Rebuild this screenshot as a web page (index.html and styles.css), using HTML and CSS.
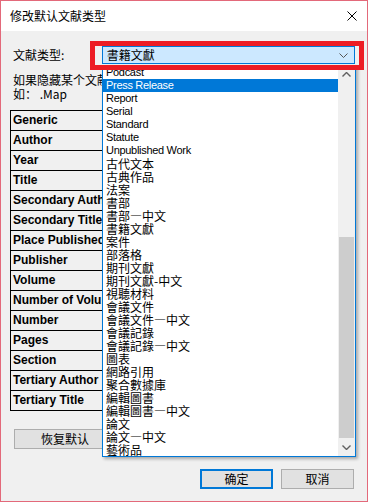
FILE: index.html
```html
<!DOCTYPE html>
<html lang="zh-CN">
<head>
    <meta charset="UTF-8">
    <meta name="viewport" content="width=device-width, initial-scale=1.0">
    <title>修改默认文献类型</title>
    <link rel="stylesheet" href="styles.css">
</head>
<body>
    <div class="window">
        <div class="titlebar">
            <span class="title">修改默认文献类型</span>
            <svg class="close" width="10" height="10" viewBox="0 0 10 10">
                <path d="M0.5 0.5 L9.5 9.5 M9.5 0.5 L0.5 9.5" stroke="#000" stroke-width="1" fill="none"/>
            </svg>
        </div>

        <div class="content">
            <div class="type-row">
                <label class="type-label">文献类型:</label>
                <div class="combo">
                    <span class="combo-value">書籍文獻</span>
                    <svg class="chev" width="9" height="5" viewBox="0 0 9 5">
                        <path d="M0.5 0.5 L4.5 4.5 L8.5 0.5" stroke="#555" stroke-width="1" fill="none"/>
                    </svg>
                </div>
            </div>

            <div class="hint">
                <p>如果隐藏某个文献类型，请在类型名称前加上“.”，</p>
                <p>如：&nbsp;.Map</p>
            </div>

            <table class="fields">
                <tr><td>Generic</td><td></td></tr>
                <tr><td>Author</td><td></td></tr>
                <tr><td>Year</td><td></td></tr>
                <tr><td>Title</td><td></td></tr>
                <tr><td>Secondary Author</td><td></td></tr>
                <tr><td>Secondary Title</td><td></td></tr>
                <tr><td>Place Published</td><td></td></tr>
                <tr><td>Publisher</td><td></td></tr>
                <tr><td>Volume</td><td></td></tr>
                <tr><td>Number of Volumes</td><td></td></tr>
                <tr><td>Number</td><td></td></tr>
                <tr><td>Pages</td><td></td></tr>
                <tr><td>Section</td><td></td></tr>
                <tr><td>Tertiary Author</td><td></td></tr>
                <tr><td>Tertiary Title</td><td></td></tr>
            </table>

            <button class="btn restore">恢复默认</button>

            <div class="footer">
                <button class="btn primary">确定</button>
                <button class="btn">取消</button>
            </div>
        </div>

        <!-- open dropdown of the combo box -->
        <div class="dropdown">
            <div class="options">
                <div class="opt">Podcast</div>
                <div class="opt selected">Press Release</div>
                <div class="opt">Report</div>
                <div class="opt">Serial</div>
                <div class="opt">Standard</div>
                <div class="opt">Statute</div>
                <div class="opt">Unpublished Work</div>
                <div class="opt zh">古代文本</div>
                <div class="opt zh">古典作品</div>
                <div class="opt zh">法案</div>
                <div class="opt zh">書部</div>
                <div class="opt zh">書部—中文</div>
                <div class="opt zh">書籍文獻</div>
                <div class="opt zh">案件</div>
                <div class="opt zh">部落格</div>
                <div class="opt zh">期刊文獻</div>
                <div class="opt zh">期刊文獻-中文</div>
                <div class="opt zh">視聽材料</div>
                <div class="opt zh">會議文件</div>
                <div class="opt zh">會議文件—中文</div>
                <div class="opt zh">會議記錄</div>
                <div class="opt zh">會議記錄—中文</div>
                <div class="opt zh">圖表</div>
                <div class="opt zh">網路引用</div>
                <div class="opt zh">聚合數據庫</div>
                <div class="opt zh">編輯圖書</div>
                <div class="opt zh">編輯圖書—中文</div>
                <div class="opt zh">論文</div>
                <div class="opt zh">論文—中文</div>
                <div class="opt zh">藝術品</div>
            </div>
            <div class="scrollbar">
                <div class="arrow">
                    <svg width="9" height="5" viewBox="0 0 9 5">
                        <path d="M0.5 4.5 L4.5 0.5 L8.5 4.5" stroke="#606060" stroke-width="1.4" fill="none"/>
                    </svg>
                </div>
                <div class="track">
                    <div class="thumb"></div>
                </div>
                <div class="arrow">
                    <svg width="9" height="5" viewBox="0 0 9 5">
                        <path d="M0.5 0.5 L4.5 4.5 L8.5 0.5" stroke="#606060" stroke-width="1.4" fill="none"/>
                    </svg>
                </div>
            </div>
        </div>

        <!-- annotation frame around the combo box -->
        <div class="mark"></div>
    </div>
</body>
</html>
```

FILE: styles.css
```css
body {
    margin: 0;
    font-family: "Noto Sans CJK SC", "Liberation Sans", sans-serif;
    font-size: 12px;
    color: #000;
}

.window {
    position: relative;
    width: 368px;
    height: 502px;
    box-sizing: border-box;
    border: 1px solid #e3697a;
    background-color: #f0f0f0;
    overflow: hidden;
}

.titlebar {
    height: 30px;
    background-color: #fff;
    display: flex;
    align-items: center;
    justify-content: space-between;
    padding: 0 10px 0 9px;
}

.title {
    font-size: 12px;
    line-height: 14px;
}

.content {
    padding: 0 12px;
}

.type-row {
    display: flex;
    align-items: center;
    margin-top: 15px;
    height: 18px;
}

.type-label {
    width: 89px;
    line-height: 14px;
}

.combo {
    width: 254px;
    height: 18px;
    box-sizing: border-box;
    border: 1px solid #0078d7;
    background-color: #cce8ff;
    display: flex;
    align-items: center;
    justify-content: space-between;
    padding: 0 6px 0 4px;
}

.combo-value {
    font-family: "Noto Sans CJK TC", sans-serif;
    line-height: 14px;
}

.hint {
    margin-top: 9px;
    white-space: nowrap;
}

.hint p {
    margin: 0;
    line-height: 14px;
}

.fields {
    margin-top: 9px;
    margin-left: -3px;
    width: 330px;
    border-collapse: collapse;
    font-family: "Liberation Sans", sans-serif;
    font-weight: bold;
    font-size: 12px;
}

.fields td {
    border: 1px solid #000;
    height: 19px;
    padding: 0 2px;
    line-height: 19px;
    white-space: nowrap;
    overflow: hidden;
}

.fields td:first-child {
    width: 120px;
}

.btn {
    height: 20px;
    width: 73px;
    box-sizing: border-box;
    border: 1px solid #adadad;
    background-color: #e1e1e1;
    font-family: "Noto Sans CJK SC", sans-serif;
    font-size: 12px;
    line-height: 16px;
    padding: 0;
    color: #000;
}

.restore {
    display: block;
    margin-top: 18px;
    margin-left: 1px;
    width: 102px;
}

.footer {
    display: flex;
    justify-content: flex-end;
    gap: 8px;
    margin-top: 20px;
    padding-right: 1px;
}

.primary {
    border: 2px solid #0078d7;
}

.dropdown {
    position: absolute;
    left: 101px;
    top: 64px;
    width: 254px;
    height: 392px;
    box-sizing: border-box;
    border: 1px solid #0078d7;
    background-color: #fff;
    box-shadow: 2px 2px 3px rgba(0,0,0,0.3);
    display: flex;
}

.options {
    flex: 1;
}

.opt {
    height: 13px;
    line-height: 13px;
    padding-left: 3px;
    font-family: "Liberation Sans", sans-serif;
    font-size: 11px;
    letter-spacing: -0.3px;
    white-space: nowrap;
    overflow: hidden;
}

.opt.zh {
    font-family: "Noto Sans CJK TC", sans-serif;
    font-size: 12px;
    letter-spacing: 0;
}

.opt.selected {
    background-color: #0078d7;
    color: #fff;
}

.scrollbar {
    width: 17px;
    background-color: #f0f0f0;
    display: flex;
    flex-direction: column;
}

.arrow {
    height: 17px;
    display: flex;
    align-items: center;
    justify-content: center;
}

.track {
    flex: 1;
}

.thumb {
    margin: 154px 1px 0;
    height: 201px;
    background-color: #cdcdcd;
}

.mark {
    position: absolute;
    left: 89px;
    top: 40px;
    width: 274px;
    height: 29px;
    box-sizing: border-box;
    border: 5px solid #ed1c24;
}
```
